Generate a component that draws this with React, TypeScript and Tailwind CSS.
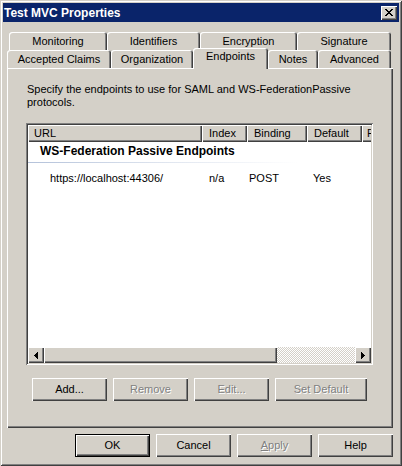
import React from "react";

const raised =
  "shadow-[inset_1px_1px_0_#ffffff,inset_-1px_-1px_0_#404040,inset_-2px_-2px_0_#808080]";
const tabEdge =
  "shadow-[inset_1px_1px_0_#ffffff,inset_-1px_0_0_#404040,inset_-2px_0_0_#808080]";
const sunken =
  "shadow-[inset_1px_1px_0_#808080,inset_-1px_-1px_0_#ffffff,inset_2px_2px_0_#404040,inset_-2px_-2px_0_#d4d0c8]";
const greyed = "text-[#808080] [text-shadow:1px_1px_0_#ffffff]";

function Tab({ children, className }: { children: React.ReactNode; className: string }) {
  return (
    <div className={`h-[18px] pt-[3px] text-center leading-[13px] rounded-t-[3px] ${tabEdge} ${className}`}>
      {children}
    </div>
  );
}

function Btn({
  children,
  className = "",
  off,
  primary,
}: {
  children: React.ReactNode;
  className?: string;
  off?: boolean;
  primary?: boolean;
}) {
  const edge = primary
    ? "shadow-[inset_0_0_0_1px_#000000,inset_2px_2px_0_#ffffff,inset_-2px_-2px_0_#404040,inset_-3px_-3px_0_#808080]"
    : raised;
  return (
    <div
      className={`flex h-[23px] w-[75px] items-center justify-center text-[11px] ${edge} ${
        off ? greyed : "text-black"
      } ${className}`}
    >
      {children}
    </div>
  );
}

function Arrow({ left }: { left?: boolean }) {
  return (
    <div className={`flex w-[16px] items-center justify-center bg-[#d4d0c8] ${raised}`}>
      <svg width="4" height="7" viewBox="0 0 4 7" shapeRendering="crispEdges">
        {left ? (
          <g fill="#000">
            <rect x="0" y="3" width="1" height="1" />
            <rect x="1" y="2" width="1" height="3" />
            <rect x="2" y="1" width="1" height="5" />
            <rect x="3" y="0" width="1" height="7" />
          </g>
        ) : (
          <g fill="#000">
            <rect x="3" y="3" width="1" height="1" />
            <rect x="2" y="2" width="1" height="3" />
            <rect x="1" y="1" width="1" height="5" />
            <rect x="0" y="0" width="1" height="7" />
          </g>
        )}
      </svg>
    </div>
  );
}

export default function App() {
  return (
    <div
      className={`flex h-[466px] w-[402px] flex-col bg-[#d4d0c8] p-[3px] text-[11px] text-black font-['Liberation_Sans',Arial,sans-serif] shadow-[inset_1px_1px_0_#d4d0c8,inset_-1px_-1px_0_#404040,inset_2px_2px_0_#ffffff,inset_-2px_-2px_0_#808080]`}
    >
      {/* caption */}
      <div className="flex h-[19px] items-center justify-between bg-[#0a246a] pl-[1px] pr-[2px]">
        <span className="text-[12px] font-bold text-white">Test MVC Properties</span>
        <div className={`flex h-[14px] w-[16px] items-center justify-center bg-[#d4d0c8] ${raised}`}>
          <svg width="8" height="7" viewBox="0 0 8 7" shapeRendering="crispEdges" fill="#000">
            <rect x="0" y="0" width="2" height="1" />
            <rect x="6" y="0" width="2" height="1" />
            <rect x="1" y="1" width="2" height="1" />
            <rect x="5" y="1" width="2" height="1" />
            <rect x="2" y="2" width="4" height="1" />
            <rect x="3" y="3" width="2" height="1" />
            <rect x="2" y="4" width="4" height="1" />
            <rect x="1" y="5" width="2" height="1" />
            <rect x="5" y="5" width="2" height="1" />
            <rect x="0" y="6" width="2" height="1" />
            <rect x="6" y="6" width="2" height="1" />
          </svg>
        </div>
      </div>

      {/* tabs */}
      <div className="ml-[6px] mt-[10px] flex">
        <Tab className="w-[98px]">Monitoring</Tab>
        <Tab className="w-[93px]">Identifiers</Tab>
        <Tab className="w-[97px]">Encryption</Tab>
        <Tab className="w-[94px]">Signature</Tab>
      </div>
      <div className="ml-[4px] flex h-[18px] items-start">
        <Tab className="w-[104px]">Accepted Claims</Tab>
        <Tab className="w-[82px]">Organization</Tab>
        <div
          className={`relative z-10 -mt-[2px] h-[21px] w-[75px] rounded-t-[3px] bg-[#d4d0c8] pt-[2px] text-center leading-[13px] ${tabEdge}`}
        >
          Endpoints
        </div>
        <Tab className="w-[50px]">Notes</Tab>
        <Tab className="w-[73px]">Advanced</Tab>
      </div>

      {/* page */}
      <div className={`ml-[4px] flex h-[360px] w-[386px] flex-col pl-[19px] pt-[15px] ${raised}`}>
        <p className="ml-px leading-[13px]">
          Specify the endpoints to use for SAML and WS-FederationPassive
          <br />
          protocols.
        </p>

        <div className={`mt-[14px] flex h-[242px] w-[347px] flex-col bg-white p-[2px] ${sunken}`}>
          <div className="flex h-[17px] shrink-0 overflow-hidden bg-[#d4d0c8] leading-[17px]">
            <div className={`w-[174px] shrink-0 pl-[6px] ${raised}`}>URL</div>
            <div className={`w-[45px] shrink-0 pl-[7px] ${raised}`}>Index</div>
            <div className={`w-[60px] shrink-0 pl-[7px] ${raised}`}>Binding</div>
            <div className={`w-[55px] shrink-0 pl-[7px] ${raised}`}>Default</div>
            <div className={`w-[50px] shrink-0 pl-[5px] ${raised}`}>Port</div>
          </div>

          <div className="flex flex-1 flex-col">
            <div className="mt-px h-[16px] pl-[12px] text-[12px] font-bold leading-[16px]">
              WS-Federation Passive Endpoints
            </div>
            <div className="mt-[3px] h-px w-[270px] bg-linear-to-r from-[#b4c2da] via-[#dfe5ef] to-white" />
            <div className="mt-[9px] flex leading-[13px]">
              <div className="w-[174px] pl-[22px]">https://localhost:44306/</div>
              <div className="w-[45px] pl-[7px]">n/a</div>
              <div className="w-[60px] pl-[2px]">POST</div>
              <div className="w-[55px] pl-[6px]">Yes</div>
            </div>
          </div>

          <div className="flex h-[16px] shrink-0">
            <Arrow left />
            <div className={`w-[233px] bg-[#d4d0c8] ${raised}`} />
            <div className="flex-1 bg-[repeating-conic-gradient(#d4d0c8_0_25%,#ffffff_0_50%)] [background-size:2px_2px]" />
            <Arrow />
          </div>
        </div>

        <div className="ml-[6px] mt-[13px] flex gap-[6px]">
          <Btn>Add...</Btn>
          <Btn off>Remove</Btn>
          <Btn off>Edit...</Btn>
          <Btn off className="w-[92px]">
            Set Default
          </Btn>
        </div>
      </div>

      {/* dialog buttons */}
      <div className="mr-[6px] mt-[6px] flex justify-end gap-[6px]">
        <Btn primary>OK</Btn>
        <Btn>Cancel</Btn>
        <Btn off>
          <span>
            <span className="underline">A</span>pply
          </span>
        </Btn>
        <Btn>Help</Btn>
      </div>
    </div>
  );
}
